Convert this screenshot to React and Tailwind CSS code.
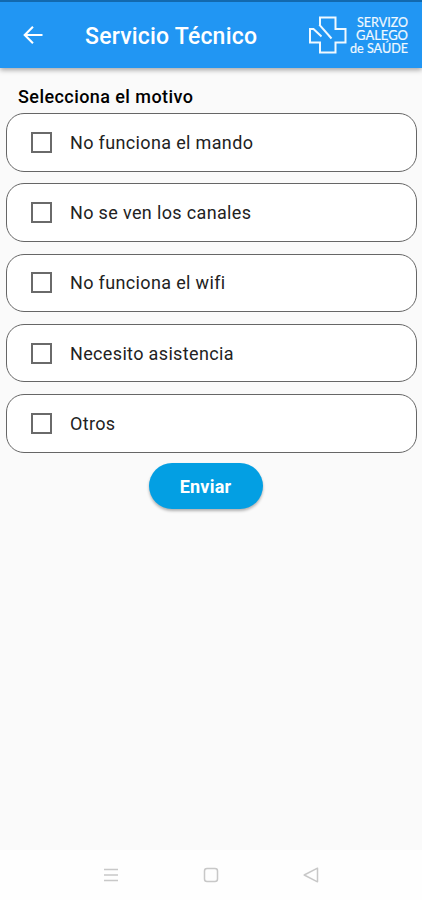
import React, { useState } from 'react';

const MOTIVOS = [
  'No funciona el mando',
  'No se ven los canales',
  'No funciona el wifi',
  'Necesito asistencia',
  'Otros',
];

const SergasLogo = () => (
  <svg width="104" height="44" viewBox="0 0 104 44" fill="none" className="mt-px shrink-0 overflow-visible">
    <g stroke="#f0f9ff" strokeWidth="2">
      <path d="M13 12.500V4.500H28.500V16H38.500V29.500H28.500V39.500H13V29.500H3V16H6.500L14.500 23.500" />
      <path d="M12.300 11.700L24.500 25.500" />
    </g>
    <g fill="#f0f9ff" stroke="#f0f9ff" strokeWidth="0.200" fontFamily="Lato, sans-serif" fontSize="14">
      <text x="50" y="13.500" textLength="51" lengthAdjust="spacingAndGlyphs">SERVIZO</text>
      <text x="49" y="27" textLength="52" lengthAdjust="spacingAndGlyphs">GALEGO</text>
      <text x="43" y="40" textLength="58" lengthAdjust="spacingAndGlyphs">de SAÚDE</text>
    </g>
  </svg>
);

const Header = () => (
  <header className="relative z-10 flex h-[68px] shrink-0 items-center border-t-2 border-[#1269ae] bg-[#2196f3] pb-px shadow-[0_2px_5px_rgba(0,0,0,0.35)]">
    <button className="ml-[21px] flex size-6 items-center justify-center" aria-label="Volver">
      <svg width="24" height="24" viewBox="0 0 24 24" fill="#fff">
        <path d="M21.500 11H6.300l6.400-6.400L11.200 3 2.200 12l9 9 1.500-1.500L6.300 13H21.500z" />
      </svg>
    </button>
    <h1 className="ml-10 flex-1 whitespace-nowrap pt-[5px] text-[23px] font-medium tracking-[0.2px] text-white">Servicio Técnico</h1>
    <div className="mr-[11px]">
      <SergasLogo />
    </div>
  </header>
);

const Motivo = ({ label, checked, onToggle }) => (
  <button
    onClick={onToggle}
    className="flex h-[58.500px] w-full items-center rounded-[18px] border border-[#666] bg-white pl-6 text-left"
  >
    <span className={`size-[21px] shrink-0 border-2 border-[#6a6a6a] ${checked ? 'bg-[#2196f3]' : ''}`} />
    <span className="ml-[18px] text-[18px] tracking-[0.35px] text-[#222]">{label}</span>
  </button>
);

const NavBar = () => (
  <nav className="flex h-[50px] shrink-0 items-center justify-center gap-[84px] bg-[#fefefe]">
    <svg width="16" height="16" viewBox="0 0 16 16" stroke="#c8c8c8" strokeWidth="1.500">
      <path d="M1 2.500h14M1 8h14M1 13.500h14" />
    </svg>
    <svg width="16" height="16" viewBox="0 0 16 16" fill="none" stroke="#c8c8c8" strokeWidth="1.500">
      <rect x="1.500" y="1.500" width="13" height="13" rx="2.500" />
    </svg>
    <svg width="16" height="16" viewBox="0 0 16 16" fill="none" stroke="#c8c8c8" strokeWidth="1.500" strokeLinejoin="round">
      <path d="M14.500 1.200V14.800L1.200 8z" />
    </svg>
  </nav>
);

const App = () => {
  const [selected, setSelected] = useState([]);

  const toggle = (label) =>
    setSelected((prev) => (prev.includes(label) ? prev.filter((l) => l !== label) : [...prev, label]));

  return (
    <div className="flex h-[900px] w-[422px] flex-col bg-[#fafafa] font-['Roboto',sans-serif]">
      <Header />
      <main className="flex flex-1 flex-col pl-[6px] pr-[5px] pt-[17px]">
        <h2 className="pl-3 text-[18px] font-medium leading-6 tracking-[0.43px] text-black">Selecciona el motivo</h2>
        <div className="mt-[4.300px] flex flex-col gap-[11.700px]">
          {MOTIVOS.map((label) => (
            <Motivo key={label} label={label} checked={selected.includes(label)} onToggle={() => toggle(label)} />
          ))}
        </div>
        <button className="ml-[142.500px] mt-[10.700px] h-[46px] w-[114px] rounded-full bg-[#039fe3] text-[18px] font-bold tracking-[0.2px] text-white shadow-[0_2px_3px_rgba(0,0,0,0.3)]">
          Enviar
        </button>
      </main>
      <NavBar />
    </div>
  );
};

export default App;
